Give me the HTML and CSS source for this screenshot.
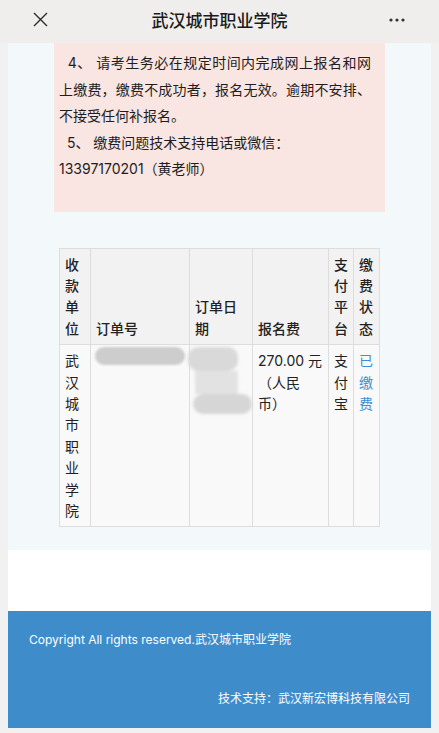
FILE: index.html
```html
<!DOCTYPE html>
<html lang="zh-CN">
<head>
    <meta charset="UTF-8">
    <meta name="viewport" content="width=device-width, initial-scale=1.0">
    <title>武汉城市职业学院</title>
    <link rel="stylesheet" href="styles.css">
</head>
<body>
    <div class="topbar">
        <span class="topbar-left">
            <svg width="15" height="15" viewBox="0 0 15 15"><path d="M1 1 L14 14 M14 1 L1 14" stroke="#2b2b2b" stroke-width="1.4" fill="none"/></svg>
        </span>
        <h1>武汉城市职业学院</h1>
        <span class="topbar-right">
            <svg width="16" height="4" viewBox="0 0 16 4"><circle cx="2" cy="2" r="1.6" fill="#333"/><circle cx="8" cy="2" r="1.6" fill="#333"/><circle cx="14" cy="2" r="1.6" fill="#333"/></svg>
        </span>
    </div>

    <div class="page">
        <div class="content">
            <!-- 报名须知 -->
            <div class="notice">
                <p><span class="first-line">&nbsp;&nbsp;4、 请考生务必在规定时间内完成网上报名和网</span>上缴费，缴费不成功者，报名无效。逾期不安排、不接受任何补报名。</p>
                <p>&nbsp;&nbsp;5、 缴费问题技术支持电话或微信：<br>13397170201（黄老师）</p>
            </div>

            <!-- 缴费记录 -->
            <table class="orders">
                <colgroup>
                    <col class="c-unit">
                    <col class="c-no">
                    <col class="c-date">
                    <col class="c-fee">
                    <col class="c-pay">
                    <col class="c-state">
                </colgroup>
                <thead>
                    <tr>
                        <th>收款单位</th>
                        <th>订单号</th>
                        <th>订单日期</th>
                        <th>报名费</th>
                        <th>支付平台</th>
                        <th>缴费状态</th>
                    </tr>
                </thead>
                <tbody>
                    <tr>
                        <td>武汉城市职业学院</td>
                        <td><div class="blur-no"></div></td>
                        <td>
                            <div class="blur-date">
                                <div class="b1"></div>
                                <div class="b2"></div>
                                <div class="b3"></div>
                            </div>
                        </td>
                        <td>270.00 元（人民币）</td>
                        <td>支付宝</td>
                        <td class="paid">已缴费</td>
                    </tr>
                </tbody>
            </table>
        </div>

        <div class="blank"></div>

        <div class="footer">
            <div class="copyright">Copyright All rights reserved.武汉城市职业学院</div>
            <div class="support">技术支持：武汉新宏博科技有限公司</div>
        </div>
    </div>
</body>
</html>
```

FILE: styles.css
```css
body {
    margin: 0 0 6px;
    background-color: #f1f1f1;
    font-family: Inter, "Noto Sans CJK SC", sans-serif;
    color: #222;
    text-spacing-trim: space-all;
}

.topbar {
    display: grid;
    grid-template-columns: 1fr auto 1fr;
    align-items: center;
    height: 43px;
    background-color: #efeeed;
}

.topbar h1 {
    margin: 0;
    font-size: 17px;
    font-weight: 500;
    color: #1a1a1a;
    padding-bottom: 4px;
}

.topbar-left {
    display: flex;
    padding-left: 33px;
    padding-bottom: 4px;
}

.topbar-right {
    display: flex;
    justify-content: flex-end;
    padding-right: 34px;
    padding-bottom: 4px;
}

.page {
    margin: 0 8px;
}

.content {
    background-color: #f3f8fb;
    padding: 0 46px 23px;
}

.notice {
    background-color: #f9e5e1;
    padding: 7px 14px 29px 5px;
    font-size: 14px;
    line-height: 26.5px;
    color: #1e1e1e;
}

.notice p {
    margin: 0;
    text-align: justify;
}

.notice .first-line {
    display: block;
    text-align-last: justify;
}

.orders {
    width: 320px;
    margin: 36px 5px 0;
    border-collapse: collapse;
    table-layout: fixed;
    font-size: 14px;
    line-height: 21.4px;
}

.c-unit { width: 31px; }
.c-no { width: 99px; }
.c-date { width: 63px; }
.c-fee { width: 76px; }
.c-pay { width: 25px; }
.c-state { width: 26px; }

.orders th,
.orders td {
    border: 1px solid #dddddd;
    padding: 5px;
    text-align: left;
    word-break: break-all;
}

.orders th {
    background-color: #f2f2f2;
    vertical-align: bottom;
    font-weight: 500;
}

.orders td {
    background-color: #f9f9f9;
    vertical-align: top;
}

.orders .paid {
    color: #3d8fd1;
}

/* 打码的订单号和日期 */
.blur-no {
    width: 90px;
    height: 18px;
    margin: -3px 0 0 -1px;
    background-color: #cdcdcd;
    border-radius: 9px;
    filter: blur(1px);
}

.blur-date {
    margin: -3px 0 0 -7px;
    filter: blur(1.5px);
}

.blur-date .b1 {
    width: 50px;
    height: 24px;
    background-color: #d9d9d9;
    border-radius: 10px;
}

.blur-date .b2 {
    width: 43px;
    height: 23px;
    margin-left: 7px;
    background-color: #e2e2e2;
}

.blur-date .b3 {
    width: 59px;
    height: 20px;
    margin-left: 5px;
    background-color: #d6d6d6;
    border-radius: 10px;
}

.blank {
    height: 61px;
    background-color: #fff;
}

.footer {
    height: 117px;
    box-sizing: border-box;
    background-color: #3e8dca;
    color: #fff;
    font-size: 12px;
    padding: 21px 21px 0;
}

.copyright {
    line-height: 16px;
}

.support {
    margin-top: 43px;
    text-align: right;
    line-height: 16px;
}
```
